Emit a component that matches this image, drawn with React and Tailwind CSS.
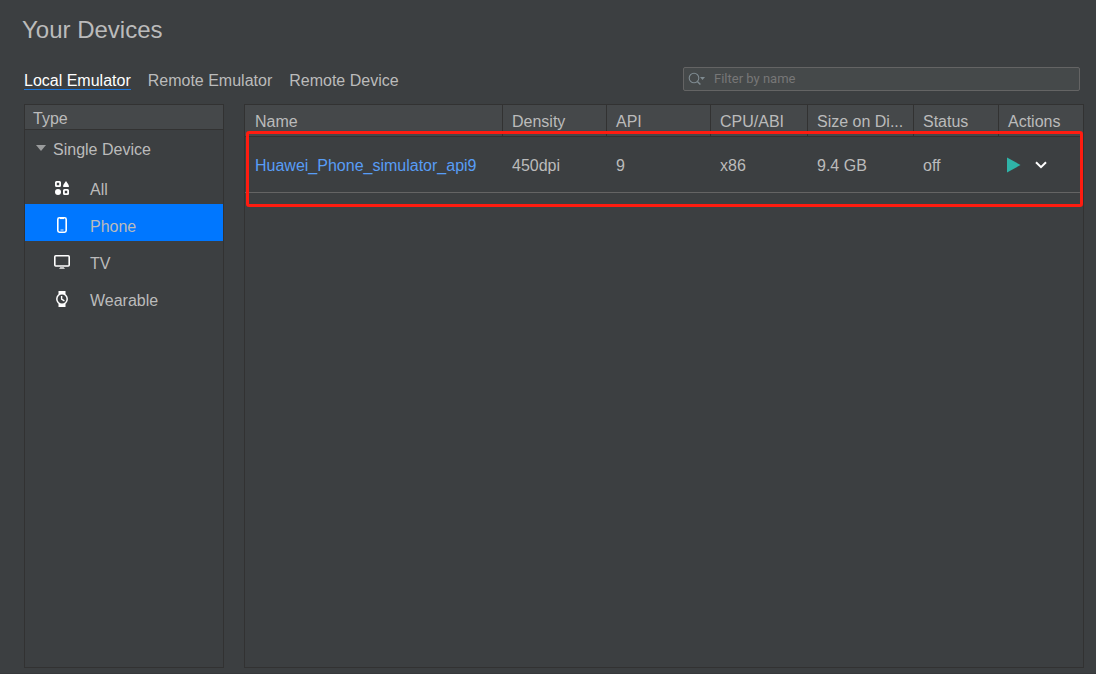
import { useState } from "react";

const tabs = ["Local Emulator", "Remote Emulator", "Remote Device"];

function AllIcon() {
  return (
    <svg width="14" height="14" viewBox="0 0 14 14" fill="none" aria-hidden="true">
      <rect x="0.9" y="0.9" width="4.2" height="4.2" rx="0.6" stroke="#fff" strokeWidth="1.8" />
      <path d="M11 0C12 1.4 13.6 3.4 14 5.2C14 5.8 13.6 6 13 6H9C8.4 6 8 5.8 8 5.2C8.4 3.4 10 1.4 11 0Z" fill="#fff" />
      <circle cx="3" cy="11" r="3" fill="#fff" />
      <rect x="8.9" y="8.9" width="4.2" height="4.2" rx="0.6" stroke="#fff" strokeWidth="1.8" />
    </svg>
  );
}

function PhoneIcon() {
  return (
    <svg width="10" height="16" viewBox="0 0 10 16" fill="none" aria-hidden="true">
      <rect x="0.8" y="0.8" width="8.4" height="14.4" rx="1.6" stroke="#fff" strokeWidth="1.6" />
      <path d="M3 1.5H7" stroke="#fff" strokeWidth="1.2" />
      <path d="M3.5 13H6.5" stroke="#fff" strokeWidth="1.2" opacity="0.7" />
    </svg>
  );
}

function TvIcon() {
  return (
    <svg width="16" height="14" viewBox="0 0 16 14" fill="none" aria-hidden="true">
      <rect x="0.8" y="0.8" width="14.4" height="10.2" rx="1" stroke="#fff" strokeWidth="1.6" />
      <path d="M7 11H9L11 14H5Z" fill="#c4c5c6" />
    </svg>
  );
}

function WatchIcon() {
  return (
    <svg width="12" height="16" viewBox="0 0 12 16" fill="none" aria-hidden="true">
      <path d="M2.5 0H9.5V3.6H2.5ZM2.5 12.4H9.5V16H2.5Z" fill="#fff" />
      <circle cx="6" cy="8" r="5.2" fill="#3c3f41" stroke="#fff" strokeWidth="1.5" />
      <path d="M5.6 5V8.2L8.4 9.8" stroke="#fff" strokeWidth="1.4" />
    </svg>
  );
}

const types = [
  { name: "All", Icon: AllIcon },
  { name: "Phone", Icon: PhoneIcon },
  { name: "TV", Icon: TvIcon },
  { name: "Wearable", Icon: WatchIcon },
];

const columns = [
  { name: "Name", width: "w-auto" },
  { name: "Density", width: "w-[104px]" },
  { name: "API", width: "w-[104px]" },
  { name: "CPU/ABI", width: "w-[97px]" },
  { name: "Size on Di...", width: "w-[106px]" },
  { name: "Status", width: "w-[85px]" },
  { name: "Actions", width: "w-[84px]" },
];

const devices = [
  { name: "Huawei_Phone_simulator_api9", values: ["450dpi", "9", "x86", "9.4 GB", "off"] },
];

function Search() {
  return (
    <label className="flex h-6 w-[397px] items-center gap-2 rounded-[2px] border border-[#646464] bg-[#45494a] pl-1">
      <svg width="18" height="14" viewBox="0 0 18 14" fill="none" aria-hidden="true">
        <circle cx="6" cy="6" r="4.8" stroke="#7f8b91" strokeWidth="1.1" />
        <path d="M9.4 9.4L12.4 12.4" stroke="#7f8b91" strokeWidth="1.4" />
        <path d="M12 5H17L14.5 8Z" fill="#7f8b91" />
      </svg>
      <input
        type="text"
        aria-label="Filter by name"
        placeholder="Filter by name"
        className="min-w-0 flex-1 bg-transparent font-[Roboto,sans-serif] text-[13px] leading-5 text-[#bbbbbb] outline-none placeholder:text-[#777777]"
      />
    </label>
  );
}

function Sidebar() {
  const [selected, setSelected] = useState("Phone");
  return (
    <aside className="w-[200px] shrink-0 border border-[#323232]">
      <h2 className="h-[25px] border-b border-[#323232] bg-[#45484a] pl-2 leading-7">Type</h2>
      <button type="button" className="flex h-10 w-full items-center gap-[7px] pl-[11px] text-left">
        <svg className="mb-1" width="10" height="6" viewBox="0 0 10 6" aria-hidden="true">
          <path d="M0 0H10L5 6Z" fill="#9a9c9d" />
        </svg>
        Single Device
      </button>
      <ul className="-mt-[3px]">
        {types.map(({ name, Icon }) => (
          <li key={name}>
            <button
              type="button"
              onClick={() => setSelected(name)}
              className={
                "flex h-[37px] w-full items-center gap-4 pl-[25px] pt-1 text-left " +
                (selected === name ? "bg-[#0077ff]" : "")
              }
            >
              <span className="flex h-4 w-6 items-center justify-center">
                <Icon />
              </span>
              <span className="pt-1">{name}</span>
            </button>
          </li>
        ))}
      </ul>
    </aside>
  );
}

function DeviceTable() {
  return (
    <section className="relative min-w-0 flex-1 border border-[#323232]">
      <table className="w-full table-fixed border-separate border-spacing-0 text-left">
        <thead>
          <tr className="bg-[#45484a]">
            {columns.map(({ name, width }) => (
              <th
                key={name}
                className={
                  "h-8 whitespace-nowrap border-b border-r border-[#323232] px-[9px] pt-[2px] font-normal first:pl-[10px] last:border-r-0 " + width
                }
              >
                {name}
              </th>
            ))}
          </tr>
        </thead>
        <tbody>
          {devices.map((device) => (
            <tr key={device.name}>
              <td className="h-14 border-b border-[#646464] pl-[10px] pt-[2px]">
                <a href="#device" className="text-[#589df6]">{device.name}</a>
              </td>
              {device.values.map((value) => (
                <td key={value} className="border-b border-[#646464] px-[9px] pt-[2px]">{value}</td>
              ))}
              <td className="border-b border-[#646464] px-2">
                <div className="flex items-center gap-[14px]">
                  <button type="button" aria-label="Run">
                    <svg className="block" width="14" height="16" viewBox="0 0 14 16" aria-hidden="true">
                      <path d="M0 0.5L13.5 8L0 15.5Z" fill="#2fb3a8" />
                    </svg>
                  </button>
                  <button type="button" aria-label="More actions">
                    <svg className="block" width="12" height="8" viewBox="0 0 12 8" fill="none" aria-hidden="true">
                      <path d="M1 1.2L6 6.2L11 1.2" stroke="#fff" strokeWidth="2" />
                    </svg>
                  </button>
                </div>
              </td>
            </tr>
          ))}
        </tbody>
      </table>
      <div className="pointer-events-none absolute left-px right-0 top-[26px] h-[76px] rounded-[3px] border-3 border-[#ff1c10]" />
    </section>
  );
}

export default function App() {
  const [active, setActive] = useState(tabs[0]);
  return (
    <main className="flex min-h-screen flex-col border-b border-[#37393b] bg-[#3c3f41] pb-[5px] pl-6 pr-3 pt-3 font-['Liberation_Sans',Arial,sans-serif] text-base leading-6 text-[#bbbbbb]">
      <h1 className="-ml-[2px] text-2xl leading-9">Your Devices</h1>
      <div className="mt-[19px] flex items-center justify-between pr-1">
        <nav className="flex gap-[17px]">
          {tabs.map((tab) => (
            <button
              key={tab}
              type="button"
              onClick={() => setActive(tab)}
              className={
                "h-[21px] border-b leading-6 " +
                (active === tab ? "border-[#1a78e0] text-white" : "border-transparent")
              }
            >
              {tab}
            </button>
          ))}
        </nav>
        <Search />
      </div>
      <div className="mt-[13px] flex flex-1 gap-5">
        <Sidebar />
        <DeviceTable />
      </div>
    </main>
  );
}
